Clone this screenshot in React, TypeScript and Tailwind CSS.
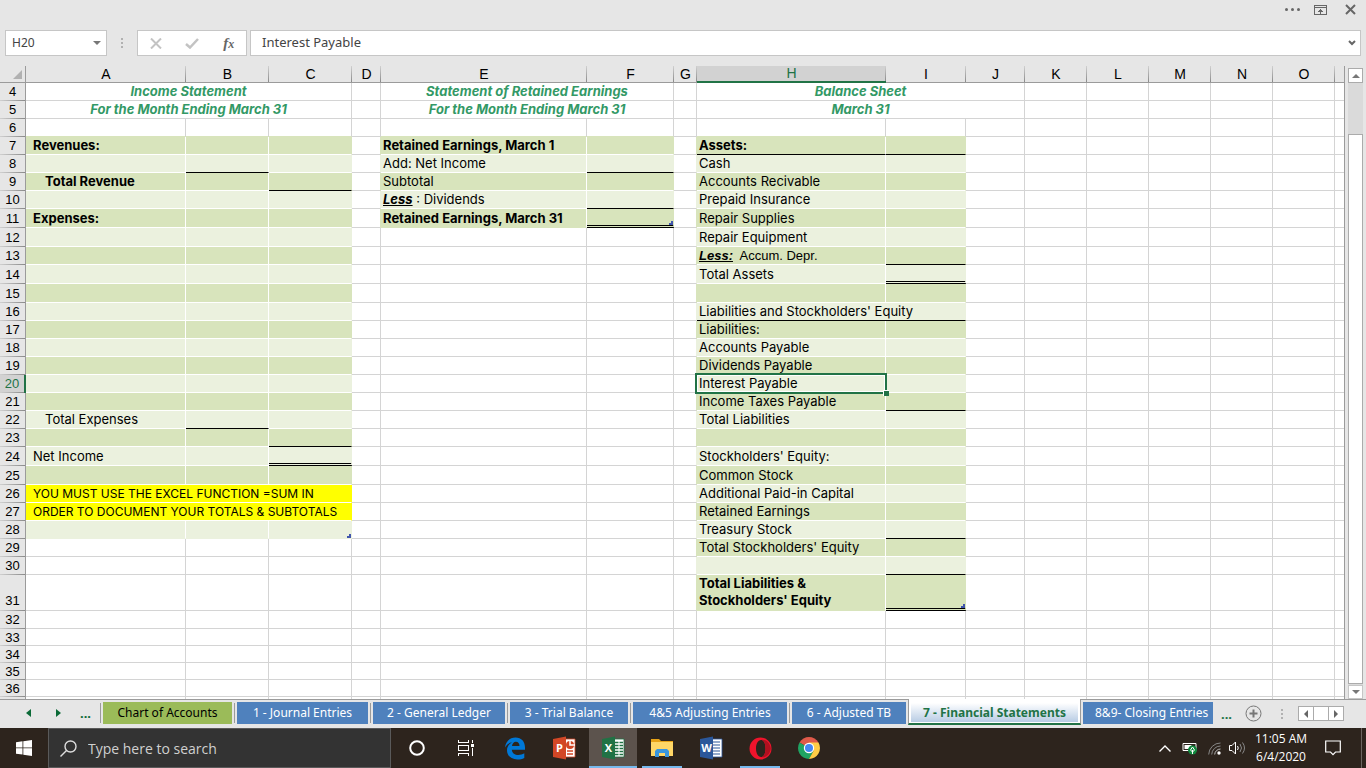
import { ReactNode } from 'react';
import clsx from 'clsx';

interface Column {
  id: string;
  width: string;
}

interface SheetTab {
  name: string;
  width: string;
  color: 'green' | 'blue';
  active?: boolean;
}

const columns: Column[] = [
  { id: 'A', width: 'w-[160px]' },
  { id: 'B', width: 'w-[83px]' },
  { id: 'C', width: 'w-[83px]' },
  { id: 'D', width: 'w-[29px]' },
  { id: 'E', width: 'w-[206px]' },
  { id: 'F', width: 'w-[87px]' },
  { id: 'G', width: 'w-[23px]' },
  { id: 'H', width: 'w-[189px]' },
  { id: 'I', width: 'w-[80px]' },
  { id: 'J', width: 'w-[59px]' },
  { id: 'K', width: 'w-[62px]' },
  { id: 'L', width: 'w-[62px]' },
  { id: 'M', width: 'w-[62px]' },
  { id: 'N', width: 'w-[62px]' },
  { id: 'O', width: 'w-[62px]' },
  { id: 'P', width: 'w-auto' }
];

const FIRST_ROW = 4;
const LAST_ROW = 37;
const ACTIVE_COL = 'H';
const ACTIVE_ROW = 20;

// Banded tables: columns and row range of each statement
const tables = [
  { cols: ['A', 'B', 'C'], from: 7, to: 28 },
  { cols: ['E', 'F'], from: 7, to: 11 },
  { cols: ['H', 'I'], from: 7, to: 31 }
];

const spans: Record<string, number> = {
  A4: 3, A5: 3, E4: 2, E5: 2, H4: 3, H5: 3, H16: 2, A26: 3, A27: 3
};

const singleLines = ['B8', 'C9', 'B22', 'C23', 'F8', 'F10', 'H7', 'I7', 'I13', 'H16', 'I21', 'I28', 'I30'];
const doubleLines = ['C24', 'F11', 'I14', 'I31'];
const tableEnds = ['C28', 'F11', 'I31'];
const highlighted = ['A26', 'A27'];

const titles: Record<string, string> = {
  A4: 'Income Statement',
  A5: 'For the Month Ending March 31',
  E4: 'Statement of Retained Earnings',
  E5: 'For the Month Ending March 31',
  H4: 'Balance Sheet',
  H5: 'March 31'
};

const values: Record<string, ReactNode> = {
  A7: <b>Revenues:</b>,
  A9: <b className="pl-3">Total Revenue</b>,
  A11: <b>Expenses:</b>,
  A22: <span className="pl-3">Total Expenses</span>,
  A24: 'Net Income',
  A26: 'YOU MUST USE THE EXCEL FUNCTION =SUM IN',
  A27: 'ORDER TO DOCUMENT YOUR TOTALS & SUBTOTALS',
  E7: <b>Retained Earnings, March 1</b>,
  E8: 'Add: Net Income',
  E9: 'Subtotal',
  E10: <><b className="italic underline">Less</b> : Dividends</>,
  E11: <b>Retained Earnings, March 31</b>,
  H7: <b>Assets:</b>,
  H8: 'Cash',
  H9: 'Accounts Recivable',
  H10: 'Prepaid Insurance',
  H11: 'Repair Supplies',
  H12: 'Repair Equipment',
  H13: <span className="font-['Liberation_Sans',sans-serif]"><b className="italic underline">Less:</b>&nbsp; Accum. Depr.</span>,
  H14: 'Total Assets',
  H16: "Liabilities and Stockholders' Equity",
  H17: 'Liabilities:',
  H18: 'Accounts Payable',
  H19: 'Dividends Payable',
  H20: 'Interest Payable',
  H21: 'Income Taxes Payable',
  H22: 'Total Liabilities',
  H24: "Stockholders' Equity:",
  H25: 'Common Stock',
  H26: 'Additional Paid-in Capital',
  H27: 'Retained Earnings',
  H28: 'Treasury Stock',
  H29: "Total Stockholders' Equity",
  H31: <b>Total Liabilities &amp;<br />Stockholders' Equity</b>
};

const sheetTabs: SheetTab[] = [
  { name: 'Chart of Accounts', width: 'w-[129px]', color: 'green' },
  { name: '1 - Journal Entries', width: 'w-[131px]', color: 'blue' },
  { name: '2 - General Ledger', width: 'w-[132px]', color: 'blue' },
  { name: '3 - Trial Balance', width: 'w-[118px]', color: 'blue' },
  { name: '4&5 Adjusting Entries', width: 'w-[154px]', color: 'blue' },
  { name: '6 - Adjusted TB', width: 'w-[114px]', color: 'blue' },
  { name: '7 - Financial Statements', width: 'w-[173px]', color: 'blue', active: true },
  { name: '8&9- Closing Entries', width: 'w-[130px]', color: 'blue' }
];

function rowHeight(row: number) {
  if (row === 31) return 'h-[36px]';
  if ([11, 12, 14, 15, 24, 25].includes(row)) return 'h-[19px]';
  if (row >= 33) return 'h-[17px]';
  return 'h-[18px]';
}

function tableAt(col: string | undefined, row: number) {
  return tables.find((t) => col && t.cols.includes(col) && row >= t.from && row <= t.to);
}

function Cell({ col, row }: { col: number; row: number }) {
  const id = columns[col].id + row;
  const span = spans[id] ?? 1;
  const lastCol = columns[col + span - 1].id;
  const nextCol = columns[col + span]?.id;
  const table = tableAt(columns[col].id, row);
  const odd = row % 2 === 1;
  const isActive = id === ACTIVE_COL + ACTIVE_ROW;

  // The right edge takes the band colour when a table begins or ends on it
  let right = nextCol ? 'border-r border-r-[#d4d4d4]' : 'border-r-0';
  if (highlighted.includes(id)) right = 'border-r border-r-[#ffff00]';
  else if (table && tableAt(nextCol, row)) right = 'border-r border-r-white';
  else if (table || tableAt(nextCol, row)) right = odd ? 'border-r border-r-[#d8e4bc]' : 'border-r border-r-[#ebf1de]';

  let bottom = 'border-b border-b-[#d4d4d4]';
  if (doubleLines.includes(id)) bottom = 'border-b-[3px] border-b-black [border-bottom-style:double]';
  else if (singleLines.includes(id)) bottom = 'border-b border-b-black';
  else if (table && tableAt(lastCol, row + 1)) bottom = 'border-b border-b-white';
  else if (table) bottom = odd ? 'border-b border-b-[#d8e4bc]' : 'border-b border-b-[#ebf1de]';
  else if (tableAt(lastCol, row + 1)) bottom = 'border-b border-b-[#d8e4bc]';

  return (
    <td
      colSpan={span}
      className={clsx(
        'relative p-0 whitespace-nowrap',
        right,
        bottom,
        row === 31 ? 'align-top' : 'align-middle',
        titles[id] && 'text-center font-bold italic text-[#339966]',
        !titles[id] && (columns[col].id === 'A' ? 'pl-[7px]' : 'pl-[2px]'),
        highlighted.includes(id) ? 'bg-[#ffff00] text-[12px]' : table ? (odd ? 'bg-[#d8e4bc]' : 'bg-[#ebf1de]') : 'bg-white'
      )}
    >
      {titles[id] ?? values[id]}
      {isActive && (
        <span className="pointer-events-none absolute -inset-[2px] z-10 border-2 border-[#217346] shadow-[inset_0_0_0_1px_white]">
          <span className="absolute -right-[4px] -bottom-[4px] h-[6px] w-[6px] border-t border-l border-white bg-[#217346]" />
        </span>
      )}
      {tableEnds.includes(id) && (
        <svg className="absolute right-0 bottom-0" width="4" height="4" viewBox="0 0 4 4" shapeRendering="crispEdges">
          <path d="M2 0h2v4H0V2h2z" fill="#4256ad" />
        </svg>
      )}
    </td>
  );
}

function SheetRow({ row }: { row: number }) {
  const cells: ReactNode[] = [];
  for (let c = 0; c < columns.length; c += spans[columns[c].id + row] ?? 1) {
    cells.push(<Cell key={columns[c].id} col={c} row={row} />);
  }
  return (
    <tr className={rowHeight(row)}>
      <th
        scope="row"
        className={clsx(
          "bg-[linear-gradient(to_right,#d0d0d0,#8a8a8a)] bg-[length:100%_1px] bg-bottom bg-no-repeat p-0 text-center font-['Liberation_Sans',sans-serif] text-[13px] font-normal leading-[16px]",
          row === 31 ? 'align-bottom pb-[2px]' : 'align-middle',
          row === ACTIVE_ROW
            ? 'border-r-2 border-[#217346] bg-[#d2d2d2] text-[#217346]'
            : 'border-r border-[#9b9b9b] bg-[#e6e6e6]'
        )}
      >
        {row === LAST_ROW ? '' : row}
      </th>
      {cells}
    </tr>
  );
}

function TitleBar() {
  return (
    <header className="flex h-[30px] items-start justify-end gap-[14px] pt-1 pr-[10px] text-[#666]">
      <button aria-label="More" className="pt-[4px]">
        <svg width="15" height="3" viewBox="0 0 15 3" fill="currentColor">
          <circle cx="1.5" cy="1.5" r="1.5" />
          <circle cx="7.5" cy="1.5" r="1.5" />
          <circle cx="13.5" cy="1.5" r="1.5" />
        </svg>
      </button>
      <button aria-label="Ribbon display options" className="pt-px">
        <svg width="13" height="10" viewBox="0 0 13 10" fill="none" stroke="currentColor" shapeRendering="crispEdges">
          <path d="M.5.5h12v9H.5zM.5 2.5h12M6.500 4v5M4 6.500h1.500v-1h2v1H9" />
        </svg>
      </button>
      <button aria-label="Close" className="pl-1">
        <svg width="11" height="11" viewBox="0 0 11 11" fill="none" stroke="currentColor" strokeWidth="2">
          <path d="M1 1l9 9M10 1l-9 9" />
        </svg>
      </button>
    </header>
  );
}

function FormulaBar() {
  return (
    <div className="flex h-[26px] items-stretch pr-[5px] pl-[5px] font-['Noto_Sans',sans-serif] text-[13px] text-[#444]">
      <div className="flex w-[102px] items-center border border-[#c6c6c6] bg-white pr-[5px] pl-[6px]">
        <input aria-label="Name box" defaultValue="H20" className="w-full min-w-0 bg-transparent text-[12px] outline-none" />
        <button aria-label="Name list">
          <svg width="8" height="4" viewBox="0 0 8 4" fill="#777"><path d="M0 0h8L4 4z" /></svg>
        </button>
      </div>
      <div className="flex w-[30px] items-center justify-center">
        <svg width="2" height="10" viewBox="0 0 2 10" fill="#b1b1b1"><path d="M0 0h2v2H0zM0 4h2v2H0zM0 8h2v2H0z" /></svg>
      </div>
      <div className="flex w-[110px] items-center justify-around border border-[#c6c6c6] bg-white">
        <button aria-label="Cancel">
          <svg width="12" height="11" viewBox="0 0 12 11" fill="none" stroke="#c3c3c3" strokeWidth="2"><path d="M1 .5l10 10M11 .5L1 10.500" /></svg>
        </button>
        <button aria-label="Enter">
          <svg width="14" height="11" viewBox="0 0 14 11" fill="none" stroke="#c3c3c3" strokeWidth="2.500"><path d="M1 6l4 3.500L13 1" /></svg>
        </button>
        <button aria-label="Insert function" className="font-['Liberation_Serif',serif] text-[15px] leading-4 font-bold italic text-[#666]">
          f<span className="text-[12px]">x</span>
        </button>
      </div>
      <div className="ml-[3px] flex flex-1 items-center border border-[#c6c6c6] bg-white pr-[4px] pl-[11px]">
        <input aria-label="Formula bar" defaultValue="Interest Payable" className="w-full min-w-0 bg-transparent outline-none" />
        <button aria-label="Expand formula bar">
          <svg width="8" height="6" viewBox="0 0 8 6" fill="none" stroke="#666" strokeWidth="2"><path d="M1 1l3 3 3-3" /></svg>
        </button>
      </div>
    </div>
  );
}

function Grid() {
  const rows = Array.from({ length: LAST_ROW - FIRST_ROW + 1 }, (_, i) => FIRST_ROW + i);
  return (
    <div className="min-w-0 flex-1 overflow-hidden border-r border-[#9b9b9b]">
      <table className="w-full table-fixed border-separate border-spacing-0 font-['Century_Gothic',Inter,sans-serif] text-[13px] leading-[17px] text-black">
        <colgroup>
          <col className="w-[26px]" />
          {columns.map((c) => (
            <col key={c.id} className={c.width} />
          ))}
        </colgroup>
        <thead>
          <tr className="h-[17px] font-['Liberation_Sans',sans-serif] text-[14px] leading-[15px]">
            <td className="border-r border-b border-[#9b9b9b] bg-[#e6e6e6] p-0">
              <svg className="ml-[13px]" width="9" height="9" viewBox="0 0 9 9" fill="#b1b1b1"><path d="M9 0v9H0z" /></svg>
            </td>
            {columns.map((c) => (
              <th
                key={c.id}
                scope="col"
                className={clsx(
                  'p-0 text-center font-normal',
                  c.id !== 'P' && 'bg-[linear-gradient(to_bottom,#d0d0d0,#8a8a8a)] bg-[length:1px_100%] bg-right bg-no-repeat',
                  c.id === ACTIVE_COL
                    ? 'border-b-2 border-[#217346] bg-[#d2d2d2] text-[#217346]'
                    : 'border-b border-[#9b9b9b] bg-[#e6e6e6]'
                )}
              >
                {c.id === 'P' ? '' : c.id}
              </th>
            ))}
          </tr>
        </thead>
        <tbody>
          {rows.map((r) => (
            <SheetRow key={r} row={r} />
          ))}
        </tbody>
      </table>
    </div>
  );
}

function VerticalScrollbar() {
  return (
    <div className="mt-[2px] mr-[3px] ml-[3px] flex w-[15px] flex-col bg-[#dadada]">
      <button aria-label="Scroll up" className="flex h-[15px] items-center justify-center border border-[#ababab] bg-white">
        <svg width="8" height="4" viewBox="0 0 8 4" fill="#777"><path d="M0 4h8L4 0z" /></svg>
      </button>
      <div className="h-[51px]" />
      <div className="flex-1 border border-[#ababab] bg-white" />
      <button aria-label="Scroll down" className="mt-px flex h-[14px] items-center justify-center border border-[#c6c6c6] bg-white">
        <svg width="8" height="4" viewBox="0 0 8 4" fill="#777"><path d="M0 0h8L4 4z" /></svg>
      </button>
    </div>
  );
}

function TabBar() {
  return (
    <nav className="flex h-[29px] items-start border-t border-[#9b9b9b] font-['Noto_Sans',sans-serif] text-[12px] leading-[20px]">
      <div className="flex h-[26px] w-[100px] shrink-0 items-center text-[#0b6a37]">
        <button aria-label="Previous sheet" className="ml-[26px]">
          <svg width="5" height="8" viewBox="0 0 5 8" fill="currentColor"><path d="M5 0v8L0 4z" /></svg>
        </button>
        <button aria-label="Next sheet" className="ml-[25px]">
          <svg width="5" height="8" viewBox="0 0 5 8" fill="currentColor"><path d="M0 0v8l5-4z" /></svg>
        </button>
        <button aria-label="More sheets" className="ml-[19px] text-[13px] font-bold">...</button>
      </div>
      {sheetTabs.map((tab) =>
        tab.active ? (
          <button
            key={tab.name}
            className={clsx('-mt-px h-[26px] shrink-0 border-x border-b-2 border-x-[#9b9b9b] border-b-[#217346] bg-white px-[2px] pt-[3px] font-bold whitespace-nowrap text-[#217346]', tab.width)}
          >
            <span className="block h-[19px] bg-linear-to-b from-white to-[#b8cce4]">{tab.name}</span>
          </button>
        ) : (
          <div key={tab.name} className="flex h-[25px] shrink-0 items-start pt-[2px] pr-[2px]">
            <span className={clsx('mt-px h-[20px] w-px', !tab.name.startsWith('8') && 'bg-[#9b9b9b]')} />
            <button
              className={clsx(
                'h-[22px] overflow-hidden whitespace-nowrap',
                tab.name.startsWith('8') ? 'ml-px pl-3 text-left' : 'ml-[2px]',
                tab.width,
                tab.color === 'green' ? 'bg-[#9bbb59] text-black' : 'bg-[#4f81bd] text-white'
              )}
            >
              {tab.name}
            </button>
          </div>
        )
      )}
      <div className="flex h-[27px] flex-1 items-center pr-[22px]">
        <button aria-label="More sheets" className="ml-[6px] text-[13px] font-bold text-[#217346]">...</button>
        <button aria-label="New sheet" className="ml-[13px]">
          <svg width="17" height="17" viewBox="0 0 17 17" fill="none" stroke="#777">
            <circle cx="8.500" cy="8.500" r="7.500" />
            <path d="M8.500 4.500v8M4.500 8.500h8" strokeWidth="2" />
          </svg>
        </button>
        <svg className="ml-auto" width="2" height="10" viewBox="0 0 2 10" fill="#b1b1b1"><path d="M0 0h2v2H0zM0 4h2v2H0zM0 8h2v2H0z" /></svg>
        <div className="ml-[15px] flex h-[15px] w-[46px] border border-[#ababab] bg-white">
          <button aria-label="Scroll left" className="flex flex-1 items-center justify-center">
            <svg width="4" height="8" viewBox="0 0 4 8" fill="#666"><path d="M4 0v8L0 4z" /></svg>
          </button>
          <span className="w-4 border-x border-[#ababab]" />
          <button aria-label="Scroll right" className="flex flex-1 items-center justify-center">
            <svg width="4" height="8" viewBox="0 0 4 8" fill="#666"><path d="M0 0v8l4-4z" /></svg>
          </button>
        </div>
      </div>
    </nav>
  );
}

function OfficeIcon({ letter, color, children }: { letter: string; color: string; children: ReactNode }) {
  return (
    <svg width="24" height="24" viewBox="0 0 24 24">
      <path d="M12 3h11v18H12z" fill="#fff" stroke={color} strokeWidth=".8" />
      {children}
      <path d="M1 3l13-2.500v23L1 21z" fill={color} />
      <text x="7.500" y="16" textAnchor="middle" fill="#fff" fontSize="11" fontWeight="700" fontFamily="Open Sans, sans-serif">{letter}</text>
    </svg>
  );
}

function TaskButton({ label, state, children }: { label: string; state?: 'open' | 'active'; children: ReactNode }) {
  return (
    <button
      aria-label={label}
      className={clsx('flex h-10 w-12 flex-col items-center', state === 'active' && 'bg-[#5c534d]')}
    >
      <span className="flex flex-1 items-center">{children}</span>
      <span
        className={clsx('-mt-[2px] h-[2px]', state === 'active' && 'w-full bg-[#76b9ed]', state === 'open' && 'w-10 bg-[#76b9ed]')}
      />
    </button>
  );
}

function Taskbar() {
  return (
    <footer className="flex h-10 shrink-0 items-stretch bg-[#2d241d] text-white">
      <button aria-label="Start" className="flex w-12 items-center justify-center">
        <svg width="16" height="16" viewBox="0 0 16 16" fill="#fff">
          <path d="M0 2.300L6.500 1.300v6.200H0zM7.300 1.200L16 0v7.500H7.300zM0 8.300h6.500v6.300L0 13.700zM7.300 8.300H16V16l-8.700-1.200z" />
        </svg>
      </button>
      <label className="flex w-[343px] items-center gap-[11px] border border-[#5a5a5a] bg-[#333] pl-[11px]">
        <svg width="17" height="17" viewBox="0 0 17 17" fill="none" stroke="#ddd" strokeWidth="1.400">
          <circle cx="10.500" cy="6.500" r="5.500" />
          <path d="M6.500 10.500L.5 16.500" />
        </svg>
        <input
          type="text"
          aria-label="Search"
          placeholder="Type here to search"
          className="min-w-0 flex-1 bg-transparent text-[14px] outline-none placeholder:text-[#d0d0d0]"
        />
      </label>
      <div className="ml-[2px] flex gap-px">
        <TaskButton label="Cortana">
          <svg width="16" height="16" viewBox="0 0 16 16" fill="none" stroke="#fff" strokeWidth="2"><circle cx="8" cy="8" r="6.800" /></svg>
        </TaskButton>
        <TaskButton label="Task view">
          <svg width="16" height="16" viewBox="0 0 16 16" fill="none" stroke="#fff" shapeRendering="crispEdges">
            <path d="M.5 0v2.500h10V0M.5 5.500h10v5H.5zM.5 16v-2.500h10V16M14.500 0v3M14.500 8v8" />
            <path d="M13 4h3v3h-3z" fill="#fff" stroke="none" />
          </svg>
        </TaskButton>
        <TaskButton label="Edge">
          <svg width="22" height="23" viewBox="0 0 22 23" fill="#0078d7">
            <path d="M1 10.500C1.700 4.300 6 .5 11.500.5 17.500.5 21 4.800 21 10.500v2.300H7.800c.3 3.600 3.200 5.200 6.500 5.200 2.200 0 4.200-.6 6-1.700v4.600c-2 1.100-4.300 1.600-6.900 1.600C7.300 22.500 3 18.900 3 13.300 3 9.800 5 6.900 8.300 5.300 5 5.700 2.500 7.700 1 10.500zM8 9h7.500c0-2.600-1.300-4.200-3.600-4.200C9.800 4.800 8.400 6.400 8 9z" />
          </svg>
        </TaskButton>
        <TaskButton label="PowerPoint">
          <OfficeIcon letter="P" color="#d24726">
            <circle cx="18" cy="9" r="4" fill="#d24726" />
            <path d="M18 4v5h5" fill="none" stroke="#fff" strokeWidth="1.500" />
            <path d="M15 15h6M15 18h6" stroke="#d24726" strokeWidth="1.500" />
          </OfficeIcon>
        </TaskButton>
        <TaskButton label="Excel" state="active">
          <OfficeIcon letter="X" color="#207245">
            <path d="M14 6.500h8M14 9.500h8M14 12.500h8M14 15.500h8M14 18.500h8" stroke="#207245" strokeWidth="1.600" />
            <path d="M18 4v16" stroke="#fff" />
          </OfficeIcon>
        </TaskButton>
        <TaskButton label="File Explorer" state="open">
          <svg width="22" height="20" viewBox="0 0 22 20">
            <path d="M0 1h8l2 2h12v15H0z" fill="#e8a317" />
            <path d="M0 4h22v14H0z" fill="#ffd767" />
            <path d="M4 19v-6l2-2h10l2 2v6h-4v-4H8v4z" fill="#3a96dd" />
          </svg>
        </TaskButton>
        <TaskButton label="Word">
          <OfficeIcon letter="W" color="#2b579a">
            <path d="M14 6h7M14 9h7M14 12h7M14 15h7M14 18h7" stroke="#2b579a" strokeWidth="1.200" />
          </OfficeIcon>
        </TaskButton>
        <TaskButton label="Opera" state="open">
          <svg width="23" height="23" viewBox="0 0 23 23">
            <path fillRule="evenodd" d="M11.500.5a11 11 0 100 22 11 11 0 000-22zM12 3c3 0 4.500 3.700 4.500 8.500S15 20 12 20s-5-3.700-5-8.500S9 3 12 3z" fill="#f0142c" />
            <path d="M12 3c3.500-1.200 9 1.500 9.800 8.500C21 18.500 15.500 21.200 12 20c3 0 4.500-3.700 4.500-8.500S15 3 12 3z" fill="#b0101f" />
          </svg>
        </TaskButton>
        <TaskButton label="Chrome">
          <svg width="22" height="22" viewBox="0 0 22 22">
            <path d="M11 11L1.500 5.500a11 11 0 0119 0z" fill="#e05a4a" />
            <path d="M11 11L1.500 5.500A11 11 0 0011 22l4.800-8z" fill="#1fa463" />
            <path d="M11 5.500h9.500A11 11 0 0111 22l4.500-8z" fill="#ffcd46" />
            <circle cx="11" cy="11" r="5.200" fill="#fff" />
            <circle cx="11" cy="11" r="4" fill="#4587f3" />
          </svg>
        </TaskButton>
      </div>
      <div className="ml-auto flex items-center">
        <button aria-label="Show hidden icons">
          <svg width="12" height="7" viewBox="0 0 12 7" fill="none" stroke="#fff" strokeWidth="1.400"><path d="M.5 6.500L6 1l5.500 5.500" /></svg>
        </button>
        <svg className="ml-[11px]" width="16" height="14" viewBox="0 0 16 14">
          <path d="M1 2.500h13v7H1z" fill="none" stroke="#fff" />
          <path d="M2.500 4h7v4h-7z" fill="#fff" />
          <circle cx="10.500" cy="9" r="4.500" fill="#10893e" />
          <path d="M10.500 6l2 3-2 2-2-2zM10.500 9v4" fill="none" stroke="#fff" />
        </svg>
        <svg className="ml-[10px]" width="13" height="13" viewBox="0 0 13 13" fill="none" stroke="#888">
          <path d="M.7 12.500A11.800 11.800 0 0112.500 1M3.700 12.500A8.800 8.800 0 0112.500 4" />
          <path d="M6.700 12.500A5.800 5.800 0 0112.500 7" stroke="#bbb" />
          <circle cx="11" cy="11" r="1.700" fill="#fff" stroke="none" />
        </svg>
        <svg className="ml-[8px]" width="17" height="14" viewBox="0 0 17 14" fill="none" stroke="#fff">
          <path d="M.5 4.500h2.500L6.500 1v12L3 9.500H.5z" />
          <path d="M8.500 5q1.500 2 0 4" />
          <path d="M11 3q3 4 0 8M13.500 1.500q4 5.500 0 11" stroke="#8a8a8a" />
        </svg>
        <div className="ml-[9px] flex w-[52px] flex-col items-center text-[12px] leading-[18px] whitespace-nowrap">
          <span>11:05 AM</span>
          <span>6/4/2020</span>
        </div>
        <button aria-label="Notifications" className="mr-[20px] ml-[18px]">
          <svg width="16" height="16" viewBox="0 0 16 16" fill="none" stroke="#fff" strokeWidth="1.200"><path d="M.7 1h14.600v11H10.500L8 14.700 5.500 12H.7z" /></svg>
        </button>
        <span className="mr-1 h-10 w-px bg-[#6b6560]" />
      </div>
    </footer>
  );
}

export default function App() {
  return (
    <div className="flex h-screen flex-col overflow-hidden bg-[#e6e6e6] font-['Segoe_UI','Open_Sans',sans-serif]">
      <TitleBar />
      <FormulaBar />
      <main className="flex min-h-0 flex-1 pt-[10px]">
        <Grid />
        <VerticalScrollbar />
      </main>
      <TabBar />
      <Taskbar />
    </div>
  );
}
